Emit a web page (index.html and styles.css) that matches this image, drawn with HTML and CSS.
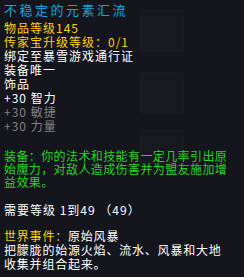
FILE: index.html
```html
<!DOCTYPE html>
<html lang="zh-CN">
<head>
<meta charset="utf-8">
<link rel="stylesheet" href="styles.css">
</head>
<body>
<div class="ghost">
  <div class="ghost-slot s1"></div>
  <div class="ghost-slot s2"></div>
  <div class="ghost-slot s3"></div>
</div>
<div class="tooltip">
  <div class="title">不稳定的元素汇流</div>
  <div class="block">
    <div class="line gold">物品等级145</div>
    <div class="line gold">传家宝升级等级：0/1</div>
    <div class="line">绑定至暴雪游戏通行证</div>
    <div class="line">装备唯一</div>
    <div class="line">饰品</div>
    <div class="line">+30 智力</div>
    <div class="line gray">+30 敏捷</div>
    <div class="line gray">+30 力量</div>
  </div>
  <div class="block green-block">
    <div class="line green">装备：你的法术和技能有一定几率引出原</div>
    <div class="line green">始魔力，对敌人造成伤害并为盟友施加增</div>
    <div class="line green">益效果。</div>
  </div>
  <div class="block req">
    <div class="line">需要等级 1到49 （49）</div>
  </div>
  <div class="block event">
    <div class="line"><span class="gold">世界事件：</span>原始风暴</div>
    <div class="line">把朦胧的始源火焰、流水、风暴和大地</div>
    <div class="line">收集并组合起来。</div>
  </div>
</div>
</body>
</html>
```
FILE: styles.css
```css
html, body {
  margin: 0;
  padding: 0;
  background: #15151e;
  width: 244px;
  height: 277px;
  overflow: hidden;
}
body {
  position: relative;
  font-family: "Noto Sans CJK SC", "Noto Sans", sans-serif;
  font-size: 12px;
  color: #ffffff;
}
.ghost {
  position: absolute;
  inset: 0;
}
.ghost-slot {
  position: absolute;
  left: 140px;
  width: 42px;
  height: 40px;
  border: 1px solid #1b1b25;
  border-radius: 3px;
  background: #181821;
}
.s1 { top: 10px; }
.s2 { top: 72px; }
.s3 { top: 130px; }
.tooltip {
  position: relative;
  padding: 2px 4px 0 4px;
}
.title {
  font-size: 13px;
  line-height: 16px;
  letter-spacing: 2.5px;
  color: #16a6dc;
  margin-bottom: 3px;
}
.line {
  line-height: 14px;
  letter-spacing: 1px;
  white-space: nowrap;
}
.gold { color: #ffd100; }
.gray { color: #828282; }
.green { color: #22d81c; }
.green-block {
  margin-top: 16px;
}
.green-block .line {
  line-height: 13px;
  letter-spacing: 0.4px;
}
.req {
  margin-top: 15px;
}
.event {
  margin-top: 12px;
}
.event .line {
  letter-spacing: 0.8px;
}
```
